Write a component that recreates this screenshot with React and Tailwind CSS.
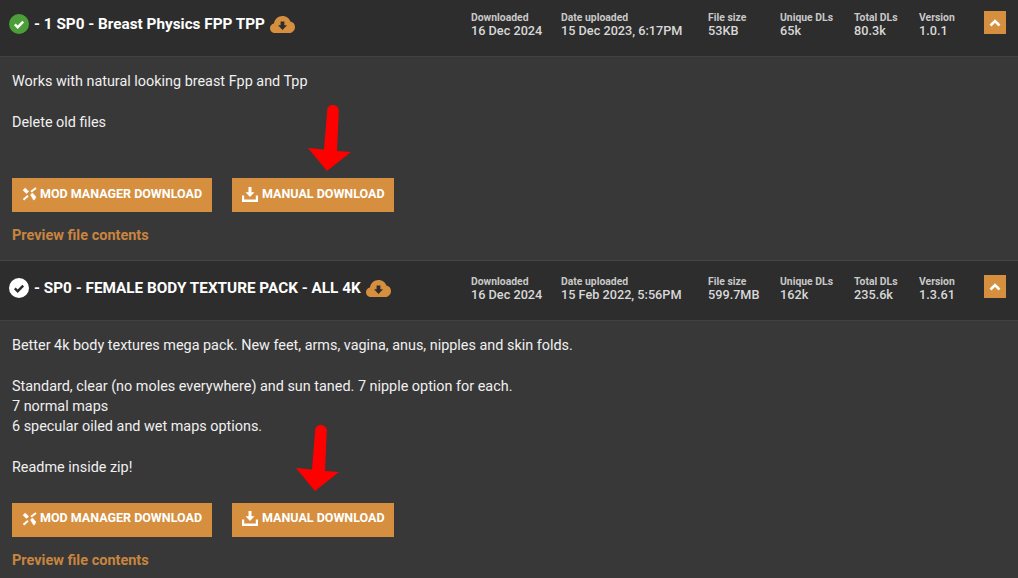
import React from "react";

const files = [
  {
    title: "- 1 SP0 - Breast Physics FPP TPP",
    done: true,
    downloaded: "16 Dec 2024",
    uploaded: "15 Dec 2023, 6:17PM",
    size: "53KB",
    unique: "65k",
    total: "80.3k",
    version: "1.0.1",
    lines: ["Works with natural looking breast Fpp and Tpp", "", "Delete old files", ""],
    arrow: "top-[48px] left-[308px]",
  },
  {
    title: "- SP0 - FEMALE BODY TEXTURE PACK - ALL 4K",
    done: false,
    downloaded: "16 Dec 2024",
    uploaded: "15 Feb 2022, 5:56PM",
    size: "599.7MB",
    unique: "162k",
    total: "235.6k",
    version: "1.3.61",
    lines: [
      "Better 4k body textures mega pack. New feet, arms, vagina, anus, nipples and skin folds.",
      "",
      "Standard, clear (no moles everywhere) and sun taned. 7 nipple option for each.",
      "7 normal maps",
      "6 specular oiled and wet maps options.",
      "",
      "Readme inside zip!",
    ],
    arrow: "top-[104px] left-[296px]",
  },
];

const CheckBadge = ({ done }) => (
  <svg width="20" height="20" viewBox="0 0 20 20" className="shrink-0">
    <circle cx="10" cy="10" r="10" fill={done ? "#4c9f38" : "#ffffff"} />
    <path
      d="M5.800 10.400l2.900 2.800 5.500-5.600"
      fill="none"
      stroke={done ? "#ffffff" : "#2d2d2d"}
      strokeWidth="2.400"
    />
  </svg>
);

const CloudIcon = () => (
  <svg width="25" height="17" viewBox="0 0 25 17" className="shrink-0">
    <path
      d="M5.200 17C2.300 17 0 14.900 0 12.200c0-2.300 1.600-4.200 3.900-4.700C4.600 3.100 8.200 0 12.500 0c3.600 0 6.700 2.200 7.900 5.500 2.700.5 4.600 2.700 4.600 5.400 0 3.400-2.700 6.100-6.100 6.100z"
      fill="#d58f3f"
    />
    <path d="M10.600 5.600h3.800v3.700h2.600l-4.500 4.600-4.500-4.600h2.600z" fill="#2d2d2d" />
  </svg>
);

const ToolsIcon = () => (
  <svg width="15" height="14" viewBox="0 0 15 14" className="shrink-0" fill="#fff" stroke="#fff">
    <path d="M1 3.200L3.200 1l3.500 3.400-2.200 2.200z" strokeWidth=".5" />
    <path d="M8.500 7.800l2-1.800 3.500 4-1.500 2.800-1 .2z" strokeWidth=".5" />
    <path d="M9 4.800L14 1M1.500 12.800L6 8.800" fill="none" strokeWidth="2" />
  </svg>
);

const TrayIcon = () => (
  <svg width="16" height="15" viewBox="0 0 16 15" className="shrink-0" fill="#fff">
    <path d="M6.500 0h3v5.200h3L8 10 3.500 5.200h3z" />
    <path d="M0 8.500h2.200v4.100h11.600V8.500H16V15H0z" />
  </svg>
);

const RedArrow = ({ className }) => (
  <svg width="43" height="66" viewBox="0 0 43 66" className={className}>
    <path d="M19.200 5C19.300 2 22 0 25 0c3 0 6 2.500 5.800 6L29 46l14 1-24 19L0 43l16 1.500z" fill="#fe0000" />
  </svg>
);

const Stat = ({ label, value, className }) => (
  <div className={className}>
    <div className="text-[10.4px] leading-[12px] font-bold text-[#c8c8c8]">{label}</div>
    <div className="text-[12.7px] leading-[14px] font-medium text-[#d8d8d8]">{value}</div>
  </div>
);

const ActionButton = ({ icon, children, className }) => (
  <button className={`flex h-[34px] items-center pb-[2px] pl-[10px] bg-[#d58f3f] text-[12.5px] font-bold text-white ${className}`}>
    {icon}
    {children}
  </button>
);

const FileRow = ({ file }) => (
  <section className="border-t border-[#444444]">
    <header className="flex h-[60px] border-b border-[#424242] bg-[#2d2d2d] pl-[9px]">
      <div className="flex h-[54px] w-[462px] items-center gap-[5px]">
        <CheckBadge done={file.done} />
        <h2 className="text-[15.3px] font-bold text-white">{file.title}</h2>
        <CloudIcon />
      </div>
      <div className="flex pt-[15px]">
        <Stat label="Downloaded" value={file.downloaded} className="w-[90px]" />
        <Stat label="Date uploaded" value={file.uploaded} className="w-[147px]" />
        <Stat label="File size" value={file.size} className="w-[72px]" />
        <Stat label="Unique DLs" value={file.unique} className="w-[74px]" />
        <Stat label="Total DLs" value={file.total} className="w-[65px]" />
        <Stat label="Version" value={file.version} className="w-[65px]" />
      </div>
      <button className="mt-[14px] flex h-[23px] w-[22px] items-center justify-center bg-[#d58f3f]">
        <svg width="12" height="8" viewBox="0 0 12 8">
          <path d="M1.500 6.500L6 2l4.500 4.500" fill="none" stroke="#fff" strokeWidth="2.600" />
        </svg>
      </button>
    </header>
    <div className="relative bg-[#383838] px-[12px] pt-[15px] pb-[15px]">
      <div className="text-[14.4px] leading-[20.25px] text-[#f0f0f0]">
        {file.lines.map((line, idx) => (
          <p key={idx} className="min-h-[20.25px]">{line}</p>
        ))}
      </div>
      <div className="mt-[25px] flex gap-[20px]">
        <ActionButton icon={<ToolsIcon />} className="w-[200px] gap-[3px]">MOD MANAGER DOWNLOAD</ActionButton>
        <ActionButton icon={<TrayIcon />} className="w-[162px] gap-[4px]">MANUAL DOWNLOAD</ActionButton>
      </div>
      <a className="mt-[15px] block text-[14.5px] leading-[18px] font-bold text-[#c9853f]">Preview file contents</a>
      <RedArrow className={`absolute ${file.arrow}`} />
    </div>
  </section>
);

export default function App() {
  return (
    <div className="h-[578px] w-[1018px] overflow-hidden bg-[#383838] font-['Roboto',sans-serif]">
      <div className="-mt-[4px]">
        {files.map((file) => (
          <FileRow key={file.title} file={file} />
        ))}
      </div>
    </div>
  );
}
